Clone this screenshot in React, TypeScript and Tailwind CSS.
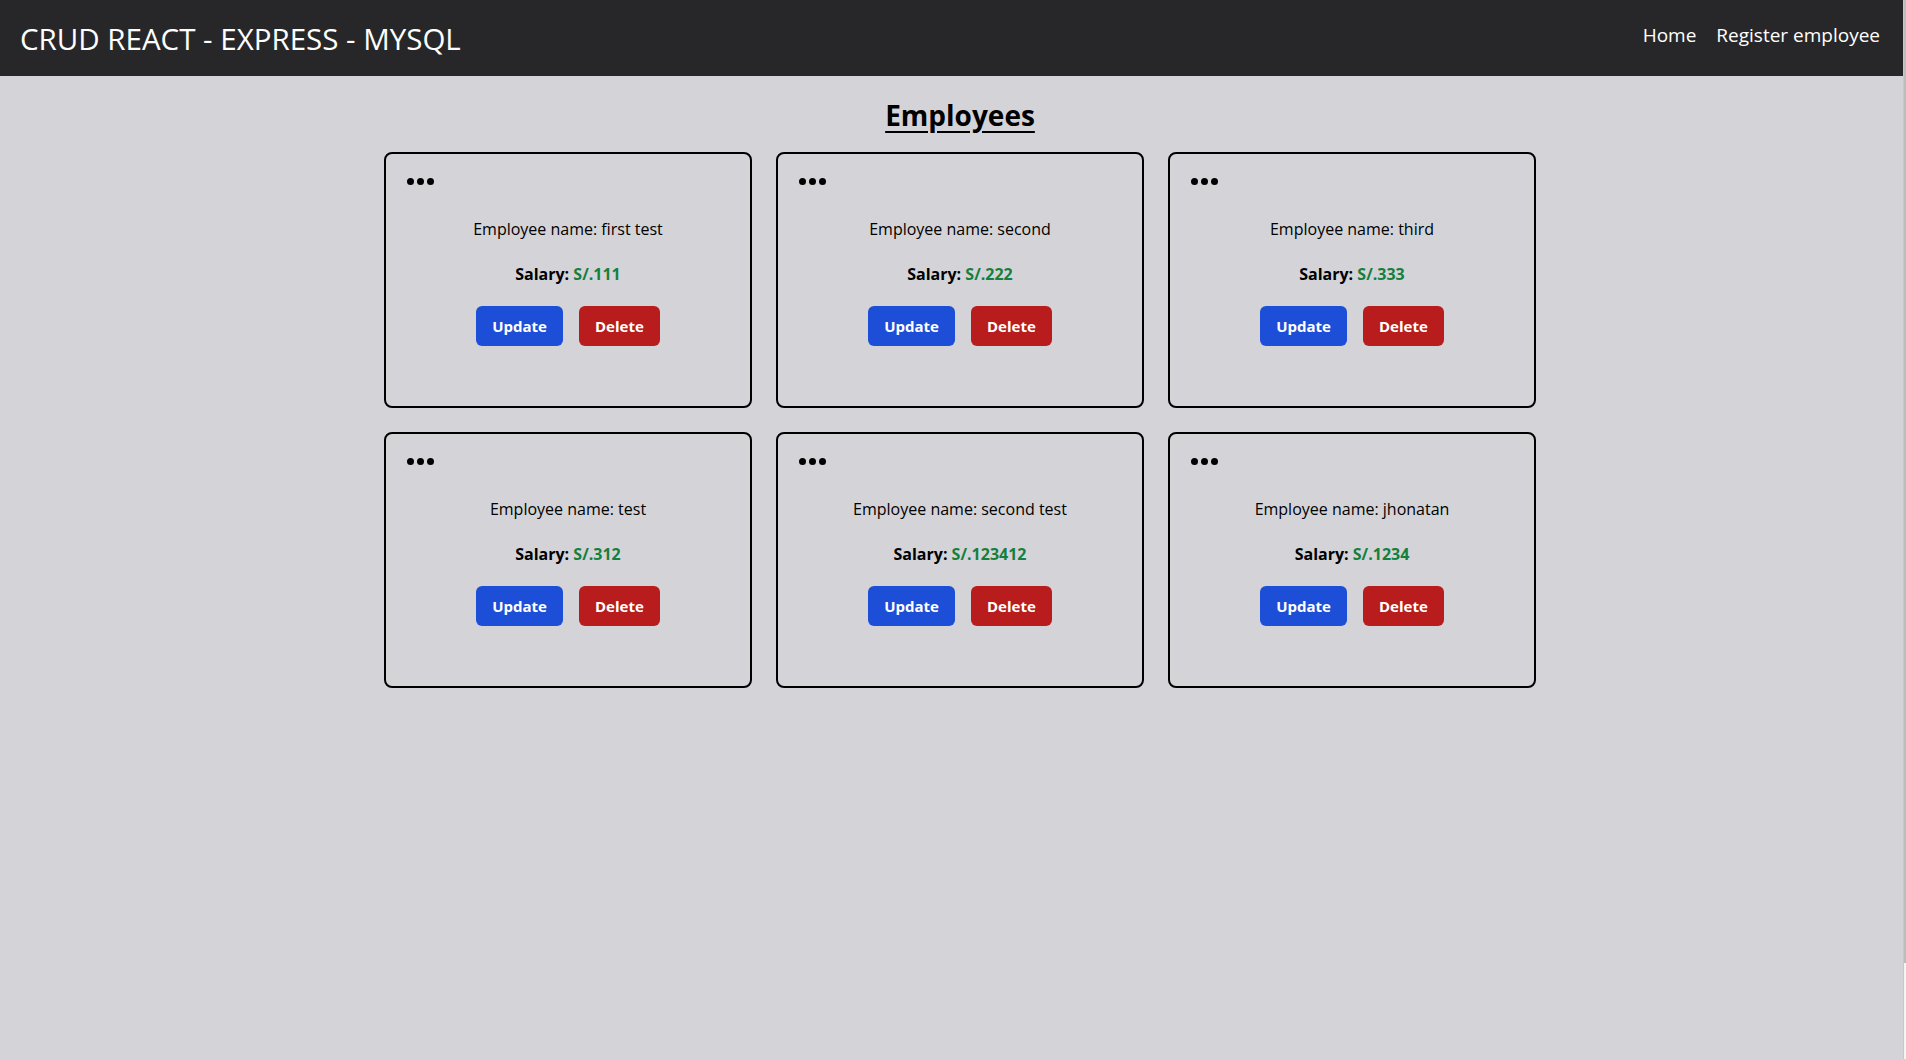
import React from 'react';

const employees = [
  { id: 1, name: 'first test', salary: 111 },
  { id: 2, name: 'second', salary: 222 },
  { id: 3, name: 'third', salary: 333 },
  { id: 4, name: 'test', salary: 312 },
  { id: 5, name: 'second test', salary: 123412 },
  { id: 6, name: 'jhonatan', salary: 1234 },
];

function EmployeeCard({ name, salary }: { name: string; salary: number }) {
  return (
    <div className="h-[256px] rounded-lg border-2 border-black px-[21px] pt-[24px]">
      {/* menu dots */}
      <div className="flex gap-[3px]">
        <span className="h-[7px] w-[7px] rounded-full bg-black" />
        <span className="h-[7px] w-[7px] rounded-full bg-black" />
        <span className="h-[7px] w-[7px] rounded-full bg-black" />
      </div>

      <p className="mt-[30px] text-center text-base leading-7 text-black">
        <span>Employee name:</span> <span>{name}</span>
      </p>

      <p className="mt-[19px] text-center text-base leading-6 font-bold text-black">
        Salary: <span className="text-[#15803d]">S/.{salary}</span>
      </p>

      <div className="mt-5 flex justify-center gap-4">
        <button className="rounded-md bg-[#1d4ed8] px-4 py-2 text-[15px] leading-6 font-bold text-white">
          Update
        </button>
        <button className="rounded-md bg-[#b91c1c] px-4 py-2 text-[15px] leading-6 font-bold text-white">
          Delete
        </button>
      </div>
    </div>
  );
}

export default function App() {
  return (
    <div className="flex min-h-screen bg-[#d4d4d8] font-['Open_Sans',sans-serif]">
      <div className="flex-1">
        {/* Navbar */}
        <header className="flex h-[76px] items-start justify-between bg-[#27272a] pr-[23px] pl-[20px] text-white">
          <h2 className="mt-[21px] text-[29.5px] leading-9">CRUD REACT - EXPRESS - MYSQL</h2>
          <nav className="mt-[21px] flex gap-5 text-[19px] leading-7">
            <a href="#">Home</a>
            <a href="#">Register employee</a>
          </nav>
        </header>

        <main className="pl-[17px]">
          <h1 className="mt-[21px] text-center text-[28px] leading-9 font-bold text-black underline underline-offset-[5px]">
            Employees
          </h1>

          <div className="mx-auto mt-[19px] grid w-[1152px] grid-cols-3 gap-x-6 gap-y-6">
            {employees.map((e) => (
              <EmployeeCard key={e.id} name={e.name} salary={e.salary} />
            ))}
          </div>
        </main>
      </div>

      {/* slim scrollbar strip */}
      <div className="flex w-[3px] flex-col border-l border-[#c8c8c8] bg-[#f4f4f4]">
        <div className="h-[963px] bg-[#bdbdbd]" />
      </div>
    </div>
  );
}
